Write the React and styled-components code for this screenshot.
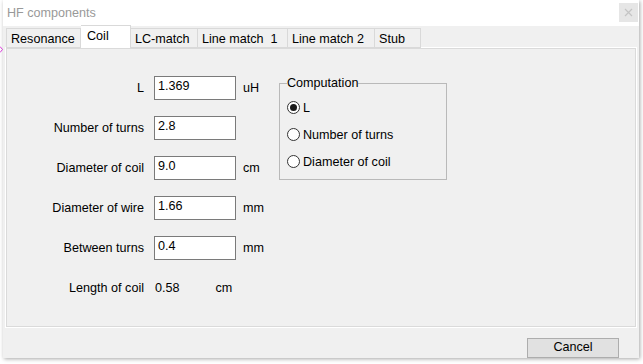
import React from 'react';
import styled, { createGlobalStyle } from 'styled-components';

const GlobalStyle = createGlobalStyle`
  html, body {
    margin: 0;
    padding: 0;
    background: #ffffff;
  }
  body {
    font-family: "Liberation Sans", Arial, sans-serif;
    font-size: 12.6px;
    color: #000;
  }
`;

const Page = styled.div`
  display: flex;
  width: 643px;
  height: 364px;
  overflow: hidden;
`;

const Gutter = styled.div`
  width: 3px;
  padding-top: 42px;
  flex: none;
`;

const Win = styled.div`
  width: 636px;
  height: 358px;
  display: flex;
  flex-direction: column;
  background: #f0f0f0;
  box-shadow: 1px 1px 4px rgba(0, 0, 0, 0.35);
`;

const TitleBar = styled.div`
  height: 26px;
  flex: none;
  display: flex;
  align-items: flex-start;
  justify-content: space-between;
  background: #ffffff;
  padding-left: 4px;
`;

const Title = styled.span`
  color: #999999;
  line-height: 26px;
`;

const CloseBtn = styled.div`
  width: 19px;
  height: 19px;
  margin-top: 3px;
  margin-right: 1px;
  background: #e6e6e6;
  display: flex;
  align-items: center;
  justify-content: center;
`;

const Body = styled.div`
  flex: 1;
  display: flex;
  flex-direction: column;
  padding: 0 2px 0 2px;
`;

const TabStrip = styled.div`
  display: flex;
  align-items: flex-end;
  height: 22px;
  padding-left: 1px;
  position: relative;
  z-index: 1;
`;

const Tab = styled.div`
  box-sizing: border-box;
  width: ${p => p.$w}px;
  height: ${p => (p.$active ? 23 : 20)}px;
  border: 1px solid #d9d9d9;
  border-left: ${p => (p.$first ? '1px solid #d9d9d9' : 'none')};
  border-bottom: ${p => (p.$active ? 'none' : '1px solid #d9d9d9')};
  background: ${p => (p.$active ? '#ffffff' : '#f0f0f0')};
  padding: ${p => (p.$active ? '3px 0 0 6px' : '3px 0 0 4px')};
  white-space: pre;
  line-height: 15px;
`;

const Panel = styled.div`
  box-sizing: border-box;
  height: 281px;
  margin-top: -1px;
  border: 1px solid #ffffff;
  box-shadow: inset -1px -1px 0 #dadada, inset 1px 1px 0 #dadada;
  display: flex;
  padding: 28px 0 0 1px;
`;

const Form = styled.div`
  width: 272px;
  display: flex;
  flex-direction: column;
  gap: 16px;
`;

const Row = styled.div`
  display: flex;
  align-items: center;
  height: 24px;
`;

const Label = styled.span`
  width: 137px;
  text-align: right;
  flex: none;
`;

const Input = styled.div`
  box-sizing: border-box;
  width: 82px;
  height: 24px;
  margin-left: 10px;
  border: 1px solid #7a7a7a;
  background: #ffffff;
  padding: 2px 0 0 3px;
  line-height: 15px;
`;

const Unit = styled.span`
  margin-left: ${p => p.$gap || 7}px;
`;

const Value = styled.span`
  margin-left: 11px;
`;

const Group = styled.fieldset`
  box-sizing: border-box;
  width: 168px;
  height: 104px;
  margin: 0;
  padding: 4px 0 0 7px;
  border: 1px solid #b9b9b9;
`;

const Legend = styled.legend`
  padding: 0;
  line-height: 14px;
`;

const Radio = styled.div`
  display: flex;
  align-items: center;
  height: 27px;
  gap: 3px;
`;

const Dot = styled.span`
  box-sizing: border-box;
  width: 13px;
  height: 13px;
  border-radius: 50%;
  border: 1px solid #333333;
  background: #ffffff;
  display: flex;
  align-items: center;
  justify-content: center;
  &::after {
    content: '';
    width: 7px;
    height: 7px;
    border-radius: 50%;
    background: ${p => (p.$on ? '#1a1a1a' : 'transparent')};
  }
`;

const Footer = styled.div`
  flex: 1;
  display: flex;
  justify-content: flex-end;
  align-items: flex-start;
  padding: 10px 18px 0 0;
`;

const Button = styled.div`
  box-sizing: border-box;
  width: 92px;
  height: 20px;
  background: #e1e1e1;
  border: 1px solid #adadad;
  text-align: center;
  line-height: 17px;
`;

const tabs = [
  { t: 'Resonance', w: 75 },
  { t: 'Coil', w: 50, active: true },
  { t: 'LC-match', w: 67 },
  { t: 'Line match  1', w: 90 },
  { t: 'Line match 2', w: 87 },
  { t: 'Stub', w: 46 },
];

const fields = [
  { label: 'L', value: '1.369', unit: 'uH' },
  { label: 'Number of turns', value: '2.8' },
  { label: 'Diameter of coil', value: '9.0', unit: 'cm' },
  { label: 'Diameter of wire', value: '1.66', unit: 'mm' },
  { label: 'Between turns', value: '0.4', unit: 'mm' },
];

const choices = ['L', 'Number of turns', 'Diameter of coil'];

export default function App() {
  return (
    <Page>
      <GlobalStyle />
      <Gutter>
        <svg width="3" height="7" viewBox="0 0 3 7">
          <path d="M0 0.5 L2.5 3.5 L0 6.5" stroke="#e040e0" fill="none" strokeWidth="1" />
        </svg>
      </Gutter>
      <Win>
        <TitleBar>
          <Title>HF components</Title>
          <CloseBtn>
            <svg width="9" height="9" viewBox="0 0 9 9">
              <path d="M1 1 L8 8 M8 1 L1 8" stroke="#c4c4c4" strokeWidth="1.2" />
            </svg>
          </CloseBtn>
        </TitleBar>
        <Body>
          <TabStrip>
            {tabs.map((tab, i) => (
              <Tab key={tab.t} $w={tab.w} $active={tab.active} $first={i === 0}>
                {tab.t}
              </Tab>
            ))}
          </TabStrip>
          <Panel>
            <Form>
              {fields.map(f => (
                <Row key={f.label}>
                  <Label>{f.label}</Label>
                  <Input>{f.value}</Input>
                  {f.unit && <Unit>{f.unit}</Unit>}
                </Row>
              ))}
              <Row>
                <Label>Length of coil</Label>
                <Value>0.58</Value>
                <Unit $gap={36}>cm</Unit>
              </Row>
            </Form>
            <Group>
              <Legend>Computation</Legend>
              {choices.map((c, i) => (
                <Radio key={c}>
                  <Dot $on={i === 0} />
                  {c}
                </Radio>
              ))}
            </Group>
          </Panel>
          <Footer>
            <Button>Cancel</Button>
          </Footer>
        </Body>
      </Win>
    </Page>
  );
}
